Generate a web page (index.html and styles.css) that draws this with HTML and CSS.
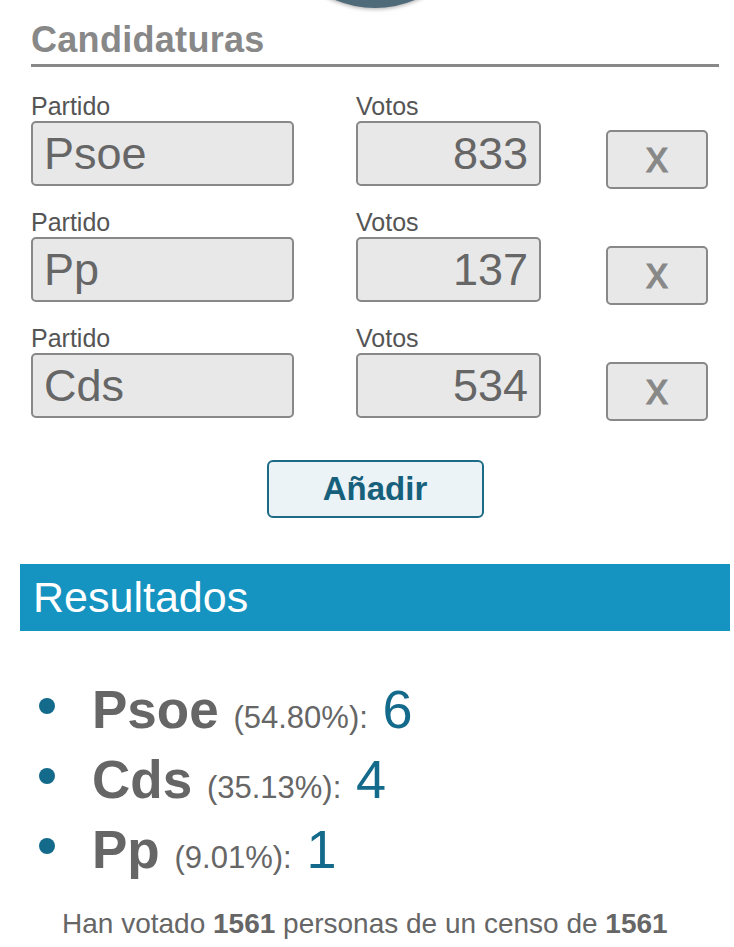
FILE: index.html
```html
<!DOCTYPE html>
<html lang="es">
<head>
<meta charset="utf-8">
<title>Candidaturas</title>
<link rel="stylesheet" href="styles.css">
</head>
<body>
<div class="top"><div class="avatar"></div></div>

<section class="cand">
  <h2 class="cand-title">Candidaturas</h2>
  <div class="rows">
    <div class="row">
      <div class="field party"><label>Partido</label><input class="inp" type="text" value="Psoe" readonly></div>
      <div class="field votes"><label>Votos</label><input class="inp num" type="text" value="833" readonly></div>
      <button class="del">x</button>
    </div>
    <div class="row">
      <div class="field party"><label>Partido</label><input class="inp" type="text" value="Pp" readonly></div>
      <div class="field votes"><label>Votos</label><input class="inp num" type="text" value="137" readonly></div>
      <button class="del">x</button>
    </div>
    <div class="row">
      <div class="field party"><label>Partido</label><input class="inp" type="text" value="Cds" readonly></div>
      <div class="field votes"><label>Votos</label><input class="inp num" type="text" value="534" readonly></div>
      <button class="del">x</button>
    </div>
  </div>
  <div class="add-wrap"><button class="add">Añadir</button></div>
</section>

<h2 class="res-title">Resultados</h2>
<ul class="results">
  <li><b class="party-name">Psoe</b> <span class="pct">(54.80%):</span> <span class="seats">6</span></li>
  <li><b class="party-name">Cds</b> <span class="pct">(35.13%):</span> <span class="seats">4</span></li>
  <li><b class="party-name">Pp</b> <span class="pct">(9.01%):</span> <span class="seats">1</span></li>
</ul>
<p class="summary">Han votado <b>1561</b> personas de un censo de <b>1561</b><br>Lo que supone una participación del <b>100.00%</b></p>
</body>
</html>
```
FILE: styles.css
```css
html, body {
  margin: 0;
  padding: 0;
  background: #ffffff;
}
body {
  font-family: "Liberation Sans", Arial, sans-serif;
  color: #666666;
  width: 734px;
  overflow: hidden;
}
.top {
  height: 14px;
  overflow: hidden;
  display: flex;
  justify-content: center;
}
.avatar {
  flex-shrink: 0;
  width: 208px;
  height: 208px;
  margin-top: -200px;
  margin-left: 16px;
  border-radius: 50%;
  background: #4f6a79;
  box-shadow: 0 1px 4px rgba(0, 0, 0, 0.35);
}
.cand {
  padding: 0 15px 0 31px;
}
.cand-title {
  margin: 6px 0 0 0;
  font-size: 36px;
  line-height: 40px;
  font-weight: bold;
  color: #888888;
  padding-bottom: 4px;
  border-bottom: 3px solid #888888;
  letter-spacing: 0.3px;
}
.rows {
  margin-top: 26px;
  display: flex;
  flex-direction: column;
  gap: 20px;
}
.row {
  display: flex;
  align-items: flex-start;
}
.field label {
  display: block;
  font-size: 25px;
  line-height: 26px;
  color: #555555;
  margin-bottom: 2px;
}
.inp {
  display: block;
  box-sizing: border-box;
  height: 65px;
  margin: 0;
  border: 2px solid #888888;
  border-radius: 5px;
  background: #e8e8e8;
  font-family: "Liberation Sans", Arial, sans-serif;
  font-size: 45px;
  color: #666666;
  padding: 0 11px;
  outline: none;
}
.party .inp { width: 263px; }
.votes { margin-left: 62px; }
.votes .inp { width: 185px; }
.num { text-align: right; }
.del {
  margin: 37px 0 0 65px;
  box-sizing: border-box;
  width: 102px;
  height: 59px;
  border: 2px solid #888888;
  border-radius: 5px;
  background: #e8e8e8;
  color: #888888;
  font-family: "Liberation Sans", Arial, sans-serif;
  font-size: 44px;
  line-height: 50px;
  padding: 0 0 6px 0;
  -webkit-text-stroke: 1px #888888;
}
.add-wrap {
  display: flex;
  justify-content: center;
  margin-top: 39px;
}
.add {
  box-sizing: border-box;
  width: 217px;
  height: 58px;
  border: 2px solid #1d6a85;
  border-radius: 6px;
  background: #ecf3f6;
  color: #16607c;
  font-family: "Liberation Sans", Arial, sans-serif;
  font-weight: bold;
  font-size: 33px;
  padding: 0;
}
.res-title {
  margin: 46px 4px 0 20px;
  height: 67px;
  line-height: 67px;
  background: #1594c1;
  color: #ffffff;
  font-weight: normal;
  font-size: 43px;
  padding-left: 13px;
}
.results {
  list-style: none;
  margin: 44px 0 0 0;
  padding: 0;
}
.results li {
  font-size: 53px;
  line-height: 70px;
  padding-left: 39px;
}
.results li::before {
  content: "";
  display: inline-block;
  width: 16px;
  height: 16px;
  border-radius: 50%;
  background: #136a8a;
  margin: 0 37px 14px 0;
}
.party-name {
  font-weight: bold;
  color: #666666;
}
.pct {
  font-size: 31px;
  line-height: 1;
  color: #666666;
}
.seats {
  font-size: 54px;
  line-height: 1;
  color: #136a8a;
}
.summary {
  margin: 22px 0 0 0;
  padding-left: 62px;
  font-size: 28px;
  line-height: 34px;
  color: #666666;
}
.summary b { color: #666666; }
```
